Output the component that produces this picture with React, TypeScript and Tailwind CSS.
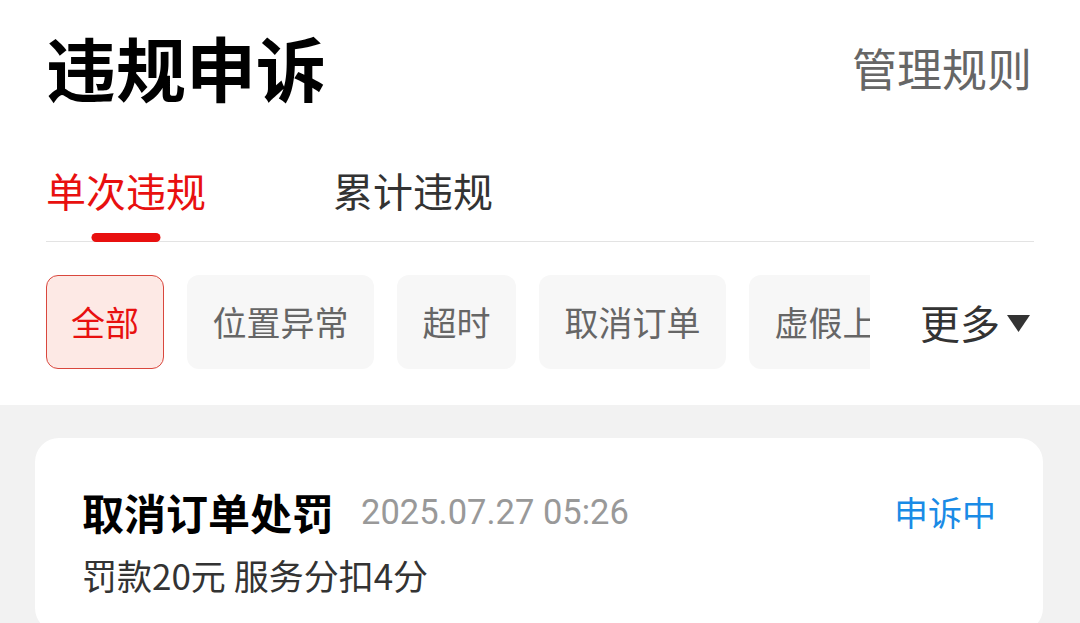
import React from "react";

const chips = ["位置异常", "超时", "取消订单", "虚假上报"];

export default function App() {
  return (
    <div
      className="w-[1080px] h-[623px] overflow-hidden bg-white"
      style={{ fontFamily: '"Noto Sans CJK SC", "Noto Sans", sans-serif' }}
    >
      {/* Header */}
      <div className="h-[138px] pl-[46px] pr-[48px] pb-[4px] flex items-center justify-between">
        <div className="text-[70px] leading-none font-bold text-black">违规申诉</div>
        <div className="text-[45px] leading-none text-[#666]">管理规则</div>
      </div>

      {/* Tabs */}
      <div className="mx-[46px] h-[104px] border-b border-[#e3e3e3] flex items-stretch gap-[127px]">
        <div className="relative flex items-center">
          <span className="text-[40px] leading-none text-[#e8100f]">单次违规</span>
          <div className="absolute left-1/2 -translate-x-1/2 bottom-[-1px] w-[69px] h-[9px] rounded-full bg-[#e8100f]" />
        </div>
        <div className="relative flex items-center">
          <span className="text-[40px] leading-none text-[#333]">累计违规</span>
        </div>
      </div>

      {/* Chips */}
      <div className="h-[163px] pl-[46px] pb-[3px] flex items-center">
        <div className="w-[824px] overflow-hidden flex gap-[23px] shrink-0">
          <div className="shrink-0 h-[94px] px-[24px] flex items-center rounded-[12px] border border-[#d9473d] bg-[#fde9e5] text-[34px] leading-none text-[#e8100f]">
            全部
          </div>
          {chips.map((c) => (
            <div
              key={c}
              className="shrink-0 h-[94px] px-[25.5px] flex items-center rounded-[12px] bg-[#f7f7f7] text-[34px] leading-none text-[#666]"
            >
              {c}
            </div>
          ))}
        </div>
        <div className="ml-[50px] flex items-center text-[40px] leading-none text-[#333]">
          <span>更多</span>
          <svg width="23" height="17" viewBox="0 0 23 17" className="ml-[7px] mt-[2px]">
            <path d="M0 0 H23 L11.5 17 Z" fill="#333" />
          </svg>
        </div>
      </div>

      {/* Content */}
      <div className="bg-[#f2f2f2] pt-[33px] pl-[35px] pr-[37px] h-[218px]">
        <div className="bg-white rounded-[24px] pt-[52px] px-[47px] pb-[40px]">
          <div className="flex items-center justify-between h-[44px]">
            <div className="flex items-center">
              <span className="text-[42px] leading-none font-bold text-black">取消订单处罚</span>
              <span
                className="ml-[27px] text-[34.5px] leading-none text-[#999]"
                style={{ fontFamily: 'Roboto, "Noto Sans CJK SC", sans-serif' }}
              >
                2025.07.27 05:26
              </span>
            </div>
            <span className="text-[34px] leading-none text-[#1a8be6]">申诉中</span>
          </div>
          <div className="mt-[23px] text-[35px] leading-none text-[#333]">罚款20元 服务分扣4分</div>
        </div>
      </div>
    </div>
  );
}
